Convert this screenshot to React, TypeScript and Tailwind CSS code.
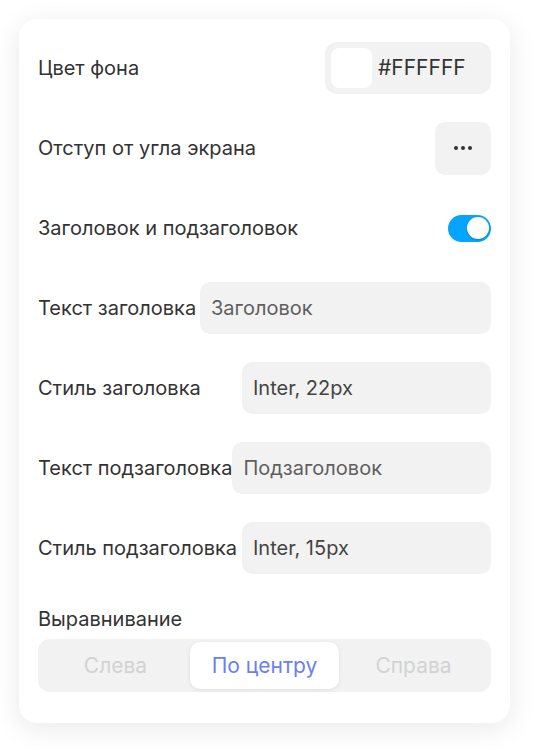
export default function App() {
  const fields = [
    { label: 'Текст заголовка', value: 'Заголовок', width: 'w-[291px]', color: 'text-[#5f5f5f]' },
    { label: 'Стиль заголовка', value: 'Inter, 22px', width: 'w-[249px]', color: 'text-[#444444]' },
    { label: 'Текст подзаголовка', value: 'Подзаголовок', width: 'w-[259px]', color: 'text-[#5f5f5f]' },
    { label: 'Стиль подзаголовка', value: 'Inter, 15px', width: 'w-[249px]', color: 'text-[#444444]' },
  ];

  const aligns = ['Слева', 'По центру', 'Справа'];
  const active = 1;

  return (
    <div className="min-h-screen bg-white p-[19px]" style={{ fontFamily: 'Inter, "Noto Sans", sans-serif' }}>
      <div className="w-[491px] bg-white rounded-[18px] shadow-[0_6px_28px_rgba(0,0,0,0.09)] px-[19px] pt-[23px] pb-[31px] text-[20px] text-[#333333]">
        <div className="flex flex-col gap-[28px]">
          <div className="h-[52px] flex items-center justify-between">
            <span>Цвет фона</span>
            <div className="w-[166px] h-[52px] bg-[#f2f2f2] rounded-[12px] flex items-center pl-[6px] gap-[6px]">
              <div className="w-[41px] h-[40px] bg-white rounded-[8px]"></div>
              <span className="text-[21px] text-[#333333]">#FFFFFF</span>
            </div>
          </div>

          <div className="h-[52px] flex items-center justify-between">
            <span>Отступ от угла экрана</span>
            <button className="w-[56px] h-[53px] bg-[#f2f2f2] rounded-[10px] flex items-center justify-center gap-[3px]">
              <span className="w-[4px] h-[4px] rounded-full bg-[#333333]"></span>
              <span className="w-[4px] h-[4px] rounded-full bg-[#333333]"></span>
              <span className="w-[4px] h-[4px] rounded-full bg-[#333333]"></span>
            </button>
          </div>

          <div className="h-[52px] flex items-center justify-between">
            <span>Заголовок и подзаголовок</span>
            <div className="w-[43px] h-[27px] rounded-full bg-[#05a4ff] flex items-center justify-end pr-[2px]">
              <div className="w-[22px] h-[22px] rounded-full bg-white shadow-[0_1px_2px_rgba(0,0,0,0.2)]"></div>
            </div>
          </div>

          {fields.map((f) => (
            <div key={f.label} className="h-[52px] flex items-center justify-between">
              <span className="whitespace-nowrap">{f.label}</span>
              <div className={`${f.width} shrink-0 h-[52px] bg-[#f2f2f2] rounded-[10px] flex items-center pl-[11px] ${f.color}`}>
                {f.value}
              </div>
            </div>
          ))}
        </div>

        <div className="mt-[33px] leading-[24px]">Выравнивание</div>
        <div className="mt-[8px] h-[53px] bg-[#f2f2f2] rounded-[12px] p-[3px] flex">
          {aligns.map((a, i) => (
            <div
              key={a}
              className={
                i === active
                  ? 'flex-1 flex items-center justify-center bg-white rounded-[10px] shadow-[0_1px_4px_rgba(0,0,0,0.08)] text-[21px] text-[#6b7ef5]'
                  : 'flex-1 flex items-center justify-center text-[21px] text-[#d2d2d2]'
              }
            >
              {a}
            </div>
          ))}
        </div>
      </div>
    </div>
  );
}
